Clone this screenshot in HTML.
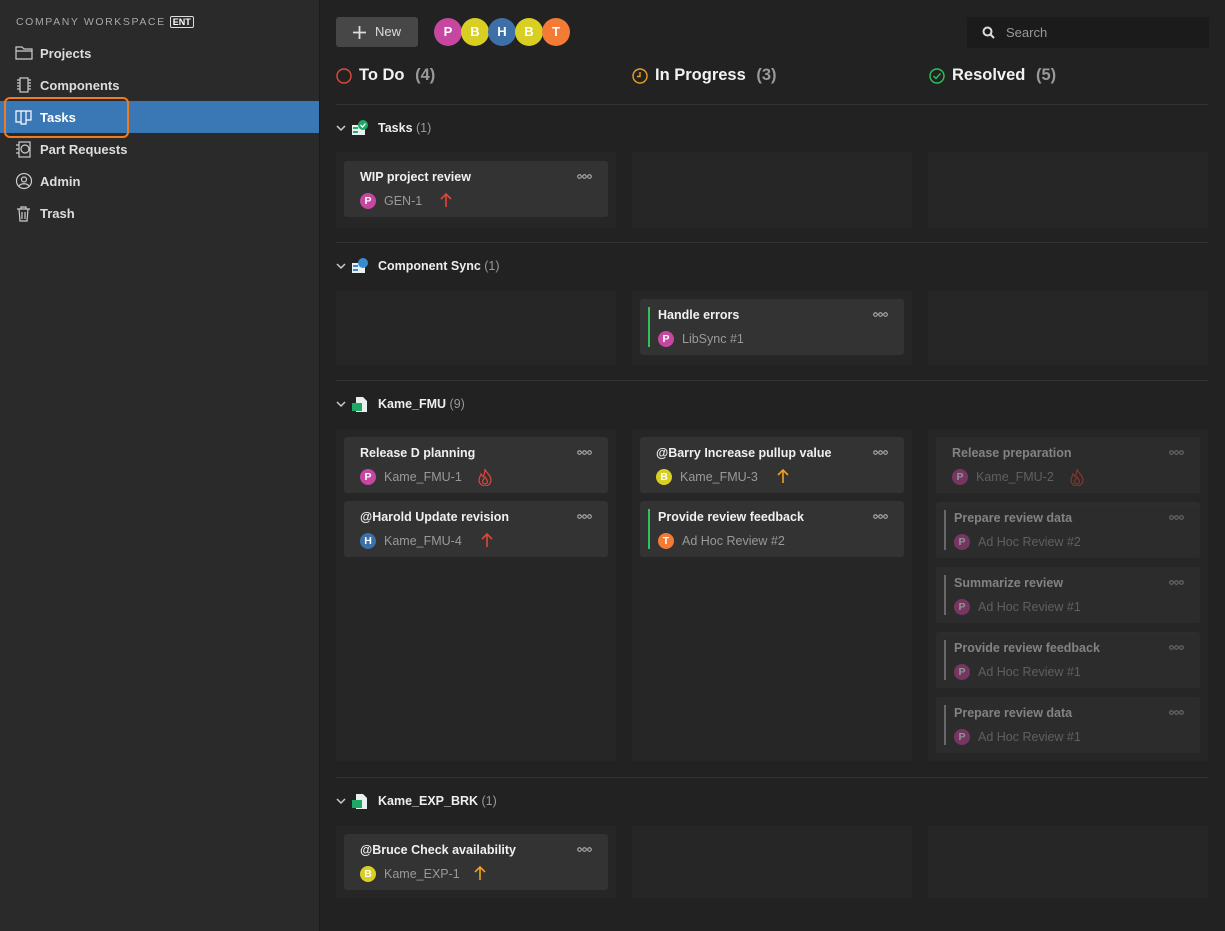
<!DOCTYPE html>
<html><head><meta charset="utf-8"><style>
*{box-sizing:border-box;margin:0;padding:0}
body{width:1225px;height:931px;background:#222;font-family:"Liberation Sans",sans-serif;color:#e8e8e8;position:relative;overflow:hidden}
.abs{position:absolute}
#side{left:0;top:0;width:320px;height:931px;background:#2a2a2a;border-right:1px solid #1a1a1a}
.ws{left:16px;top:16px;font-size:10.5px;letter-spacing:1.6px;color:#a8a8a8}
.ent{display:inline-block;border:1px solid #ddd;color:#fff;font-size:9px;letter-spacing:0;padding:0 2px;border-radius:2px;margin-left:4px;font-weight:bold;line-height:10px}
.nav{left:0;width:319px;height:32px;font-size:13px;font-weight:bold;color:#ddd;padding-left:40px;line-height:33px}
.nav svg{position:absolute;left:15px;top:8px}
.sel{background:#3a78b5;color:#fff}
.hl{left:4px;top:97px;width:125px;height:41px;border:2px solid #f07c22;border-radius:6px}
.btn{left:336px;top:17px;width:82px;height:30px;background:#474747;border-radius:3px;font-size:13px;color:#ddd;line-height:30px;padding-left:39px}
.av{position:absolute;width:28px;height:28px;border-radius:50%;color:#fff;font-weight:bold;font-size:13px;text-align:center;line-height:28px}
.search{left:967px;top:17px;width:242px;height:31px;background:#1b1b1b;border-radius:2px;font-size:13px;color:#999;line-height:31px;padding-left:39px}
.colh{top:66px;font-size:16.5px;font-weight:bold;color:#f2f2f2}
.colh span{color:#999;font-weight:bold;margin-left:6px}
.sep{left:336px;width:872px;height:1px;background:#333}
.sech{left:336px;font-size:12.5px;font-weight:bold;color:#eee;height:16px;line-height:16px;padding-left:42px}
.sech span{color:#999;font-weight:normal}
.lane{background:#262626;width:280px}
.card{position:absolute;width:264px;height:56px;background:#333;border-radius:3px}
.t{position:absolute;left:16px;top:9px;font-size:12.5px;font-weight:bold;color:#f0f0f0}
.s{position:absolute;left:40px;top:33px;font-size:12.5px;color:#999}
.a{position:absolute;left:16px;top:32px;width:16px;height:16px;border-radius:50%;color:#fff;font-size:10.5px;font-weight:bold;text-align:center;line-height:16px}
.dots{position:absolute;right:16px;top:13px;width:15px;height:5px}
.bar{position:absolute;left:8px;top:8px;width:2px;height:40px;background:#2ec25b}
.dim{opacity:.5}
.dim .t{color:#ddd}
.pi{position:absolute;top:31px}
.P{background:#c5479f}.B{background:#d9cf22}.H{background:#3d6fa8}.T{background:#f47b36}
</style></head><body>
<div id="side" class="abs"></div>
<div class="abs ws">COMPANY WORKSPACE<span class="ent">ENT</span></div>
<div class="abs nav" style="top:37px"><svg width="18" height="16" viewBox="0 0 18 16" fill="none" stroke="#ccc" stroke-width="1.2"><path d="M1 2h6l2 2h8v10H1z M1 6h16"/></svg>Projects</div>
<div class="abs nav" style="top:69px"><svg width="18" height="16" viewBox="0 0 18 16" fill="none" stroke="#ccc" stroke-width="1.2"><rect x="5" y="1" width="8" height="14"/><path d="M2 3h3M2 6h3M2 9h3M2 12h3M13 3h3M13 6h3M13 9h3M13 12h3"/></svg>Components</div>
<div class="abs nav sel" style="top:101px"><svg width="18" height="16" viewBox="0 0 18 16" fill="none" stroke="#fff" stroke-width="1.2"><path d="M1 2h5v11H1z M6 2h5v13H6z M11 2h5v9h-5"/></svg>Tasks</div>
<div class="abs hl"></div>
<div class="abs nav" style="top:133px"><svg width="18" height="18" viewBox="0 0 18 18" fill="none" stroke="#ccc" stroke-width="1.2"><rect x="4" y="1" width="11" height="15"/><circle cx="10" cy="8" r="4"/><path d="M1 4h3M1 8h3M1 12h3"/></svg>Part Requests</div>
<div class="abs nav" style="top:165px"><svg width="18" height="18" viewBox="0 0 18 18" fill="none" stroke="#ccc" stroke-width="1.2"><circle cx="9" cy="8" r="7.5"/><circle cx="9" cy="6.5" r="2.5"/><path d="M4 13c2-3 8-3 10 0"/></svg>Admin</div>
<div class="abs nav" style="top:197px"><svg width="18" height="18" viewBox="0 0 18 18" fill="none" stroke="#ccc" stroke-width="1.2"><path d="M2 4h13M6 4V2h5v2M4 4l1 12h7l1-12M7 7v7M10 7v7"/></svg>Trash</div>

<div class="abs btn"><svg class="abs" style="left:17px;top:9px" width="13" height="13"><path d="M6.5 0v13M0 6.5h13" stroke="#ddd" stroke-width="1.8"/></svg>New</div>
<div class="av P" style="left:434px;top:18px">P</div>
<div class="av B" style="left:461px;top:18px">B</div>
<div class="av H" style="left:488px;top:18px">H</div>
<div class="av B" style="left:515px;top:18px">B</div>
<div class="av T" style="left:542px;top:18px">T</div>
<div class="abs search"><svg class="abs" style="left:15px;top:9px" width="13" height="13" fill="none" stroke="#ddd" stroke-width="2"><circle cx="5.5" cy="5.5" r="4"/><path d="M8.5 8.5l3.5 3.5"/></svg>Search</div>

<svg class="abs" style="left:336px;top:68px" width="16" height="16" fill="none" stroke="#e04a3a" stroke-width="1.4"><circle cx="8" cy="8" r="7"/></svg>
<div class="abs colh" style="left:359px">To Do <span>(4)</span></div>
<svg class="abs" style="left:632px;top:68px" width="16" height="16" fill="none" stroke="#e8a020" stroke-width="1.4"><circle cx="8" cy="8" r="7"/><path d="M8 4v4.5H5"/></svg>
<div class="abs colh" style="left:655px">In Progress <span>(3)</span></div>
<svg class="abs" style="left:929px;top:68px" width="16" height="16" fill="none" stroke="#2ec25b" stroke-width="1.4"><circle cx="8" cy="8" r="7"/><path d="M4.5 8l2.5 2.5 4.5-5"/></svg>
<div class="abs colh" style="left:952px">Resolved <span>(5)</span></div>

<div class="abs sep" style="top:104px"></div>
<div class="abs sep" style="top:242px"></div>
<div class="abs sep" style="top:380px"></div>
<div class="abs sep" style="top:777px"></div>

<div class="abs sech" style="top:120px"><svg class="abs" style="left:0;top:4px" width="10" height="8" fill="none" stroke="#ccc" stroke-width="1.5"><path d="M1 2l4 4 4-4"/></svg><svg class="abs" style="left:15px;top:0" width="18" height="16"><rect x="1" y="5" width="13" height="10" fill="#e8f0f0"/><rect x="2" y="7" width="5" height="2" fill="#2aa86a"/><rect x="2" y="11" width="5" height="2" fill="#2aa86a"/><circle cx="12" cy="5" r="5" fill="#1fa865"/><path d="M9.5 5l2 2 3-3.5" stroke="#fff" fill="none" stroke-width="1.3"/></svg>Tasks <span>(1)</span></div>
<div class="abs sech" style="top:258px"><svg class="abs" style="left:0;top:4px" width="10" height="8" fill="none" stroke="#ccc" stroke-width="1.5"><path d="M1 2l4 4 4-4"/></svg><svg class="abs" style="left:15px;top:0" width="18" height="16"><rect x="1" y="5" width="13" height="10" fill="#e8f0f0"/><rect x="2" y="7" width="5" height="2" fill="#3a8ad0"/><rect x="2" y="11" width="5" height="2" fill="#3a8ad0"/><circle cx="12" cy="5" r="5" fill="#3a8ad0"/></svg>Component Sync <span>(1)</span></div>
<div class="abs sech" style="top:396px"><svg class="abs" style="left:0;top:4px" width="10" height="8" fill="none" stroke="#ccc" stroke-width="1.5"><path d="M1 2l4 4 4-4"/></svg><svg class="abs" style="left:15px;top:0" width="18" height="16"><path d="M5 1h7l4 4v11H5z" fill="#e8f0f0"/><rect x="1" y="7" width="10" height="8" fill="#1fa865"/></svg>Kame_FMU <span>(9)</span></div>
<div class="abs sech" style="top:793px"><svg class="abs" style="left:0;top:4px" width="10" height="8" fill="none" stroke="#ccc" stroke-width="1.5"><path d="M1 2l4 4 4-4"/></svg><svg class="abs" style="left:15px;top:0" width="18" height="16"><path d="M5 1h7l4 4v11H5z" fill="#e8f0f0"/><rect x="1" y="7" width="10" height="8" fill="#1fa865"/></svg>Kame_EXP_BRK <span>(1)</span></div>

<div class="abs lane" style="left:336px;top:152px;height:76px"></div>
<div class="abs lane" style="left:632px;top:152px;height:76px"></div>
<div class="abs lane" style="left:928px;top:152px;height:76px"></div>
<div class="abs lane" style="left:336px;top:291px;height:74px"></div>
<div class="abs lane" style="left:632px;top:291px;height:74px"></div>
<div class="abs lane" style="left:928px;top:291px;height:74px"></div>
<div class="abs lane" style="left:336px;top:429px;height:332px"></div>
<div class="abs lane" style="left:632px;top:429px;height:332px"></div>
<div class="abs lane" style="left:928px;top:429px;height:332px"></div>
<div class="abs lane" style="left:336px;top:826px;height:72px"></div>
<div class="abs lane" style="left:632px;top:826px;height:72px"></div>
<div class="abs lane" style="left:928px;top:826px;height:72px"></div>

<svg width="0" height="0" style="position:absolute"><defs>
<symbol id="up" viewBox="0 0 12 16"><path d="M6 15V2M1 7l5-5 5 5" fill="none" stroke-width="1.6" stroke="currentColor"/></symbol>
<symbol id="fire" viewBox="0 0 14 18"><path d="M7 1c1 4 6 6 6 11a6 6 0 01-12 0c0-3 2-4 2-6 1 1 2 2 2 3 1-2 2-5 2-8zM7 16a2.5 2.5 0 01-2.5-2.5C4.5 12 6 11 7 9c1 2 2.5 3 2.5 4.5A2.5 2.5 0 017 16z" fill="none" stroke="#e0473a" stroke-width="1.2"/></symbol>
<symbol id="dt" viewBox="0 0 15 5"><g fill="none" stroke="#bbb" stroke-width="1"><circle cx="2.5" cy="2.5" r="1.8"/><circle cx="7.5" cy="2.5" r="1.8"/><circle cx="12.5" cy="2.5" r="1.8"/></g></symbol>
</defs></svg>

<div class="card" style="left:344px;top:161px"><div class="t">WIP project review</div><svg class="dots"><use href="#dt"/></svg><div class="a P">P</div><div class="s">GEN-1</div><svg class="pi" style="left:96px;color:#e0473a" width="12" height="16"><use href="#up"/></svg></div>

<div class="card" style="left:640px;top:299px"><div class="bar"></div><div class="t" style="left:18px">Handle errors</div><svg class="dots"><use href="#dt"/></svg><div class="a P" style="left:18px">P</div><div class="s" style="left:42px">LibSync #1</div></div>

<div class="card" style="left:344px;top:437px"><div class="t">Release D planning</div><svg class="dots"><use href="#dt"/></svg><div class="a P">P</div><div class="s">Kame_FMU-1</div><svg class="pi" style="left:134px" width="14" height="18"><use href="#fire"/></svg></div>
<div class="card" style="left:344px;top:501px"><div class="t">@Harold Update revision</div><svg class="dots"><use href="#dt"/></svg><div class="a H">H</div><div class="s">Kame_FMU-4</div><svg class="pi" style="left:137px;color:#e0473a" width="12" height="16"><use href="#up"/></svg></div>

<div class="card" style="left:640px;top:437px"><div class="t">@Barry Increase pullup value</div><svg class="dots"><use href="#dt"/></svg><div class="a B">B</div><div class="s">Kame_FMU-3</div><svg class="pi" style="left:137px;color:#f0a020" width="12" height="16"><use href="#up"/></svg></div>
<div class="card" style="left:640px;top:501px"><div class="bar"></div><div class="t" style="left:18px">Provide review feedback</div><svg class="dots"><use href="#dt"/></svg><div class="a T" style="left:18px">T</div><div class="s" style="left:42px">Ad Hoc Review #2</div></div>

<div class="card dim" style="left:936px;top:437px"><div class="t">Release preparation</div><svg class="dots"><use href="#dt"/></svg><div class="a P">P</div><div class="s">Kame_FMU-2</div><svg class="pi" style="left:134px" width="14" height="18"><use href="#fire"/></svg></div>
<div class="card dim" style="left:936px;top:502px"><div class="bar" style="background:#aaa"></div><div class="t" style="left:18px">Prepare review data</div><svg class="dots"><use href="#dt"/></svg><div class="a P" style="left:18px">P</div><div class="s" style="left:42px">Ad Hoc Review #2</div></div>
<div class="card dim" style="left:936px;top:567px"><div class="bar" style="background:#aaa"></div><div class="t" style="left:18px">Summarize review</div><svg class="dots"><use href="#dt"/></svg><div class="a P" style="left:18px">P</div><div class="s" style="left:42px">Ad Hoc Review #1</div></div>
<div class="card dim" style="left:936px;top:632px"><div class="bar" style="background:#aaa"></div><div class="t" style="left:18px">Provide review feedback</div><svg class="dots"><use href="#dt"/></svg><div class="a P" style="left:18px">P</div><div class="s" style="left:42px">Ad Hoc Review #1</div></div>
<div class="card dim" style="left:936px;top:697px"><div class="bar" style="background:#aaa"></div><div class="t" style="left:18px">Prepare review data</div><svg class="dots"><use href="#dt"/></svg><div class="a P" style="left:18px">P</div><div class="s" style="left:42px">Ad Hoc Review #1</div></div>

<div class="card" style="left:344px;top:834px"><div class="t">@Bruce Check availability</div><svg class="dots"><use href="#dt"/></svg><div class="a B">B</div><div class="s">Kame_EXP-1</div><svg class="pi" style="left:130px;color:#f0a020" width="12" height="16"><use href="#up"/></svg></div>
</body></html>
